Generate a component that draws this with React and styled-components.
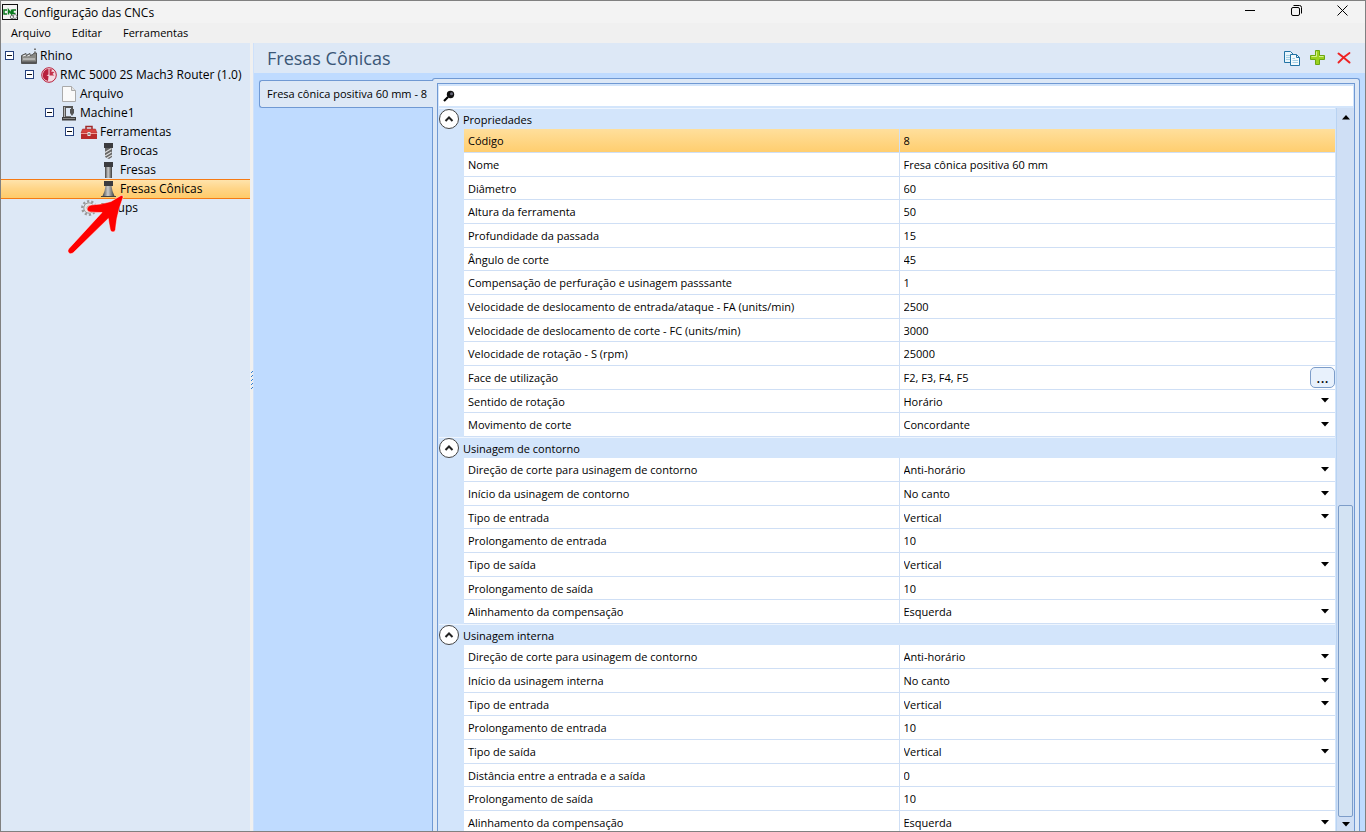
import React, { useState } from "react";
import styled, { createGlobalStyle, css } from "styled-components";

const GlobalStyle = createGlobalStyle`
  * { box-sizing: border-box; }
  html, body { margin: 0; height: 100%; }
  body, button, input, select {
    font-family: "Open Sans", "Noto Sans", sans-serif;
    font-size: 11px;
    color: #000;
  }
  button, input, select { margin: 0; padding: 0; border: 0; background: none; }
`;

const Window = styled.div`
  display: flex;
  flex-direction: column;
  height: 100vh;
  border: 1px solid #808080;
  background: #f0f0f0;
  overflow: hidden;
`;

const TitleBar = styled.header`
  display: flex;
  align-items: center;
  flex: none;
  height: 22px;
  padding-left: 1px;
  background: #f3f3f3;
`;

const WindowTitle = styled.h1`
  flex: 1;
  margin: 0;
  padding-left: 6px;
  font-size: 12px;
  font-weight: 400;
`;

const WindowButton = styled.button`
  display: grid;
  place-items: center;
  align-self: flex-start;
  width: 46px;
  height: 18px;
`;

const MenuBar = styled.nav`
  display: flex;
  align-items: center;
  flex: none;
  height: 20px;
  padding-left: 10px;
  gap: 21px;
`;

const MenuItem = styled.button`
  height: 20px;
  line-height: 20px;
`;

const Workspace = styled.div`
  display: grid;
  grid-template-columns: 249px 3px minmax(0, 1fr);
  flex: 1;
  min-height: 0;
`;

const Tree = styled.ul`
  position: relative;
  margin: 0;
  padding: 3px 0 0;
  list-style: none;
  background: #dde8f6;
`;

const TreeRow = styled.li`
  display: flex;
  align-items: center;
  height: 19px;
  padding-left: ${(p) => 4 + p.$depth * 20}px;
  font-size: 12px;
  white-space: nowrap;
  ${(p) =>
    p.$selected &&
    css`
      background: linear-gradient(#ffe5b0, #ffd588 50%, #ffcb69);
      box-shadow: inset 0 1px #f57a14, 0 1px #f57a14;
    `}
`;

const Expander = styled.button`
  display: grid;
  place-items: center;
  width: 9px;
  height: 9px;
  margin-right: 6px;
  border: 1px solid ${(p) => (p.$hidden ? "transparent" : "#24407c")};
  background: ${(p) => (p.$hidden ? "transparent" : "#fff")};
  visibility: ${(p) => (p.$hidden ? "hidden" : "visible")};
  &::after {
    content: "";
    width: 5px;
    height: 1px;
    background: #111;
  }
`;

const TreeIcon = styled.svg`
  flex: none;
  width: 18px;
  height: 18px;
  margin-right: 2px;
`;

const Pointer = styled.svg`
  position: absolute;
  left: 65px;
  top: 150px;
  width: 60px;
  height: 64px;
  pointer-events: none;
`;

const Splitter = styled.div`
  display: grid;
  grid-template-rows: 327fr 20px 441fr;
  background: #f0f0f0;
`;

const SplitterGrip = styled.svg`
  grid-row: 2;
`;

const Main = styled.main`
  display: flex;
  flex-direction: column;
  min-width: 0;
  min-height: 0;
  border-left: 1px solid #cfe1fa;
  background: #bfdbff;
`;

const MainHeader = styled.div`
  display: flex;
  align-items: center;
  flex: none;
  height: 30px;
  padding: 0 8px 0 13px;
  background: #dde8f6;
`;

const Heading = styled.h2`
  flex: 1;
  margin: 0;
  font-size: 18px;
  font-weight: 400;
  line-height: 30px;
  color: #3b5777;
`;

const ToolButton = styled.button`
  display: grid;
  place-items: center;
  width: 26px;
  height: 24px;
`;

const TabArea = styled.div`
  display: flex;
  flex: 1;
  min-height: 0;
  padding: 5px 5px 0;
`;

const TabList = styled.div`
  flex: none;
  width: 173px;
  padding-top: 2px;
`;

const Tab = styled.button`
  position: relative;
  z-index: 1;
  width: 174px;
  height: 28px;
  border: 1px solid #7099d3;
  border-right: 0;
  border-radius: 3px 0 0 3px;
  padding: 0 0 2px 7px;
  background: #dde8f6;
  text-align: left;
  white-space: nowrap;
`;

const TabPanel = styled.section`
  display: flex;
  flex: 1;
  min-width: 0;
  border: 1px solid #7099d3;
  border-bottom: 0;
  border-radius: 3px 3px 0 0;
  padding: 4px 4px 0;
  background: #dde8f6;
`;

const Grid = styled.div`
  display: flex;
  flex-direction: column;
  flex: 1;
  min-width: 0;
  border: 1px solid #7099d3;
  border-bottom: 0;
  padding: 2px 0 0 1px;
  background: #d3e5fb;
`;

const SearchRow = styled.label`
  display: flex;
  align-items: center;
  flex: none;
  height: 20px;
  margin: 0 1px 2px 0;
  padding-left: 4px;
  gap: 4px;
  background: #fff;
`;

const SearchInput = styled.input`
  flex: 1;
  height: 20px;
  outline: 0;
`;

const ScrollFrame = styled.div`
  display: grid;
  grid-template-columns: minmax(0, 1fr) 18px;
  flex: 1;
  min-height: 0;
`;

const Groups = styled.div`
  min-height: 0;
  padding-right: 1px;
  overflow: hidden;
  background: #d3e5fb;
`;

const GroupHead = styled.div`
  display: flex;
  align-items: center;
  height: 21px;
  border-top: 1px solid #eef5fe;
  gap: 4px;
`;

const GroupTitle = styled.h3`
  margin: 0;
  font-size: 11px;
  font-weight: 400;
`;

const Collapse = styled.button`
  position: relative;
  z-index: 1;
  display: grid;
  place-items: center;
  width: 20px;
  height: 20px;
  border: 1px solid #444;
  border-radius: 50%;
  background: #fff;
`;

const GroupBody = styled.div`
  padding-left: 25px;
`;

const PropTable = styled.table`
  width: 100%;
  border-spacing: 0;
  table-layout: fixed;
`;

const NameCell = styled.th`
  width: 50%;
  height: 24px;
  padding: 0 0 0 4px;
  border-bottom: 1px solid #cfdff5;
  border-right: 1px solid #cfdff5;
  font-weight: 400;
  text-align: left;
  white-space: nowrap;
`;

const ValueCell = styled.td`
  height: 24px;
  padding: 0 0 0 4px;
  border-bottom: 1px solid #cfdff5;
`;

const PropRow = styled.tr`
  background: #fff;
  &:nth-child(3n) > * { height: 23px; }
  ${(p) =>
    p.$selected &&
    css`
      background: linear-gradient(#ffdf9c, #ffcd6d);
    `}
`;

const ValueBox = styled.div`
  display: flex;
  align-items: center;
  position: relative;
  height: 22px;
`;

const ValueInput = styled.input`
  flex: 1;
  min-width: 0;
  height: 20px;
  outline: 0;
`;

const ValueSelect = styled.select`
  flex: 1;
  height: 20px;
  appearance: none;
  outline: 0;
`;

const SelectArrow = styled.svg`
  position: absolute;
  right: 6px;
  top: 8px;
  width: 8px;
  height: 5px;
  pointer-events: none;
`;

const MoreButton = styled.button`
  width: 25px;
  height: 21px;
  border: 1px solid #7d9dc9;
  border-radius: 5px;
  background: #e8f1fc;
  line-height: 17px;
  font-size: 16px;
`;

const ScrollBar = styled.div`
  display: grid;
  grid-template-rows: 18px 379fr 312fr 14px;
  justify-items: center;
  border-left: 1px solid #b9d3f2;
  background: #cfdff5;
`;

const ScrollButton = styled.button`
  grid-row: ${(p) => p.$row};
  display: grid;
  place-items: center;
  width: 16px;
`;

const ScrollThumb = styled.div`
  grid-row: 3;
  width: 15px;
  border: 1px solid #7d9dc9;
  border-radius: 2px;
  background: #d3e3f3;
`;

const steel = (
  <defs>
    <linearGradient id="steel" x1="0" x2="1">
      <stop offset="0" stopColor="#444" />
      <stop offset="0.45" stopColor="#ccc" />
      <stop offset="1" stopColor="#3c3c3c" />
    </linearGradient>
  </defs>
);

const treeIcons = {
  factory: (
    <>
      <path d="M1.500 16.500V8.500L6 6.500V8.500L10 6.500V8.500L13 7.500L14 6H16.500V16.500Z" fill="#8a8a86" stroke="#555" />
      <path d="M3 9L6 8M7.500 9L10 8" stroke="#eee" />
      <path d="M3 12H15" stroke="#ddd" />
      <path d="M2 15.500H16" stroke="#555" strokeWidth="2" />
      <path d="M15 6V4.500M15 3V1.500" stroke="#777" strokeWidth="2" />
    </>
  ),
  router: (
    <>
      <circle cx="9" cy="9" r="7.300" fill="#f3dbe2" stroke="#b8203c" />
      <path d="M8.500 3A6 6 0 0 0 5.500 14L8 15L8.500 10L6.500 9.500L8.500 8.500Z" fill="#b8203c" />
      <path d="M9.500 3L12.500 3.500L11 5.500L14.500 6L12.500 8L14.500 9.500L9.500 9.500Z" fill="#c4304a" />
    </>
  ),
  file: (
    <>
      <path d="M2.500 1.500H11.500L15.500 5.500V16.500H2.500Z" fill="#fafafa" stroke="#aaa" />
      <path d="M11.500 1.500V5.500H15.500" fill="#e4e4e4" stroke="#aaa" />
    </>
  ),
  machine: (
    <>
      <path d="M3 13V2H13V6H11V4H6V13Z" fill="#555" />
      <path d="M4.500 3V13" stroke="#b5b5b5" />
      <path d="M10 5H14V9L12 12L10 9Z" fill="#555" />
      <path d="M6 12.500H11" stroke="#777" />
      <path d="M2 13H16V16.500H2Z" fill="#3c3c3c" />
      <path d="M3 14.500H15" stroke="#888" />
    </>
  ),
  toolbox: (
    <>
      <path d="M6 6V3.500H12V6" fill="none" stroke="#a02a2a" strokeWidth="1.500" />
      <path d="M2.500 6H15.500L17 10H1Z" fill="#d84440" stroke="#9a2222" strokeWidth="0.500" />
      <path d="M1 10H17V16H1Z" fill="#b92b2b" />
      <path d="M1 10.500H17" stroke="#ef9b96" />
      <path d="M7.500 9H10.500V13H7.500Z" fill="#e8e8e8" />
      <path d="M9 10V12" stroke="#444" />
    </>
  ),
  drill: (
    <>
      <path d="M4 1H13V6H4Z" fill="#3b3b3f" />
      <path d="M5 6H12V15L9 17L5 15Z" fill="#666" />
      <path d="M5 10.500L11.500 6.500M5 14L11.500 10M7 16L12 13" stroke="#ddd" strokeWidth="1.200" />
    </>
  ),
  mill: (
    <>
      {steel}
      <path d="M4 1H13V6H4Z" fill="#3b3b3f" />
      <path d="M5 6H12V17H5Z" fill="url(#steel)" />
    </>
  ),
  cone: (
    <>
      {steel}
      <path d="M4 1H13V6H4Z" fill="#3b3b3f" />
      <path d="M5.500 6H11.500L12.500 11L14.500 16H2.500L4.500 11Z" fill="url(#steel)" />
      <path d="M1 16.500H16" stroke="#444" />
    </>
  ),
  gear: (
    <>
      <circle cx="9" cy="9" r="6.700" fill="none" stroke="#9a9a9a" strokeWidth="2.400" strokeDasharray="2.200 2" />
      <circle cx="9" cy="9" r="5.200" fill="#e4e4e4" stroke="#999" />
      <circle cx="9" cy="9" r="2" fill="#fff" stroke="#999" />
    </>
  ),
};

const treeItems = [
  { label: "Rhino", icon: "factory", depth: 0, open: true },
  { label: "RMC 5000 2S Mach3 Router (1.0)", icon: "router", depth: 1, open: true },
  { label: "Arquivo", icon: "file", depth: 2 },
  { label: "Machine1", icon: "machine", depth: 2, open: true },
  { label: "Ferramentas", icon: "toolbox", depth: 3, open: true },
  { label: "Brocas", icon: "drill", depth: 4 },
  { label: "Fresas", icon: "mill", depth: 4 },
  { label: "Fresas Cônicas", icon: "cone", depth: 4, selected: true },
  { label: "Setups", icon: "gear", depth: 3 },
];

const groups = [
  {
    title: "Propriedades",
    rows: [
      ["Código", "8"],
      ["Nome", "Fresa cônica positiva 60 mm"],
      ["Diâmetro", "60"],
      ["Altura da ferramenta", "50"],
      ["Profundidade da passada", "15"],
      ["Ângulo de corte", "45"],
      ["Compensação de perfuração e usinagem passsante", "1"],
      ["Velocidade de deslocamento de entrada/ataque - FA (units/min)", "2500"],
      ["Velocidade de deslocamento de corte - FC (units/min)", "3000"],
      ["Velocidade de rotação - S (rpm)", "25000"],
      ["Face de utilização", "F2, F3, F4, F5", "more"],
      ["Sentido de rotação", "Horário", "select"],
      ["Movimento de corte", "Concordante", "select"],
    ],
  },
  {
    title: "Usinagem de contorno",
    rows: [
      ["Direção de corte para usinagem de contorno", "Anti-horário", "select"],
      ["Início da usinagem de contorno", "No canto", "select"],
      ["Tipo de entrada", "Vertical", "select"],
      ["Prolongamento de entrada", "10"],
      ["Tipo de saída", "Vertical", "select"],
      ["Prolongamento de saída", "10"],
      ["Alinhamento da compensação", "Esquerda", "select"],
    ],
  },
  {
    title: "Usinagem interna",
    rows: [
      ["Direção de corte para usinagem de contorno", "Anti-horário", "select"],
      ["Início da usinagem interna", "No canto", "select"],
      ["Tipo de entrada", "Vertical", "select"],
      ["Prolongamento de entrada", "10"],
      ["Tipo de saída", "Vertical", "select"],
      ["Distância entre a entrada e a saída", "0"],
      ["Prolongamento de saída", "10"],
      ["Alinhamento da compensação", "Esquerda", "select"],
    ],
  },
];

function Property({ id, name, value, kind, selected }) {
  return (
    <PropRow $selected={selected}>
      <NameCell scope="row">
        <label htmlFor={id}>{name}</label>
      </NameCell>
      <ValueCell>
        <ValueBox>
          {kind === "select" ? (
            <>
              <ValueSelect id={id} defaultValue={value}>
                <option>{value}</option>
              </ValueSelect>
              <SelectArrow viewBox="0 0 8 5" aria-hidden="true">
                <path d="M0 0H8L4 4.500Z" />
              </SelectArrow>
            </>
          ) : (
            <ValueInput id={id} type="text" defaultValue={value} />
          )}
          {kind === "more" && <MoreButton type="button">...</MoreButton>}
        </ValueBox>
      </ValueCell>
    </PropRow>
  );
}

function Group({ index, title, rows }) {
  const [open, setOpen] = useState(true);
  return (
    <section>
      <GroupHead>
        <Collapse type="button" aria-label={title} aria-expanded={open} onClick={() => setOpen(!open)}>
          <svg width="10" height="8" viewBox="0 0 10 8">
            <path d="M1.500 6L5 2.500L8.500 6" fill="none" stroke="#222" strokeWidth="2" />
          </svg>
        </Collapse>
        <GroupTitle>{title}</GroupTitle>
      </GroupHead>
      {open && (
        <GroupBody>
          <PropTable>
            <tbody>
              {rows.map(([name, value, kind], i) => (
                <Property
                  key={i}
                  id={`prop-${index}-${i}`}
                  name={name}
                  value={value}
                  kind={kind}
                  selected={index === 0 && i === 0}
                />
              ))}
            </tbody>
          </PropTable>
        </GroupBody>
      )}
    </section>
  );
}

export default function App() {
  return (
    <Window>
      <GlobalStyle />
      <TitleBar>
        <svg width="16" height="17" viewBox="0 0 16 17" aria-hidden="true">
          <rect x="0.500" y="0.500" width="15" height="15" fill="#f4f4f4" stroke="#111" />
          <path d="M5 6H2V10H5M6.500 10.500V6L9.500 10V5.500M14 6H11V9.500H13.500" fill="none" stroke="#0b7a1e" strokeWidth="1.500" />
          <circle cx="10" cy="13" r="1.700" fill="none" stroke="#777" />
          <circle cx="13" cy="12.500" r="2" fill="none" stroke="#888" />
        </svg>
        <WindowTitle>Configuração das CNCs</WindowTitle>
        <WindowButton type="button" aria-label="Minimizar">
          <svg width="10" height="10"><path d="M0 5.500H10" stroke="#000" /></svg>
        </WindowButton>
        <WindowButton type="button" aria-label="Restaurar">
          <svg width="11" height="11" fill="none" stroke="#000">
            <rect x="0.500" y="2.500" width="8" height="8" rx="1.500" />
            <path d="M2.500 0.500H8.500Q10.500 0.500 10.500 2.500V8.500" />
          </svg>
        </WindowButton>
        <WindowButton type="button" aria-label="Fechar">
          <svg width="11" height="11"><path d="M0.500 0.500L10.500 10.500M10.500 0.500L0.500 10.500" stroke="#000" /></svg>
        </WindowButton>
      </TitleBar>
      <MenuBar>
        <MenuItem type="button">Arquivo</MenuItem>
        <MenuItem type="button">Editar</MenuItem>
        <MenuItem type="button">Ferramentas</MenuItem>
      </MenuBar>
      <Workspace>
        <Tree>
          {treeItems.map((item) => (
            <TreeRow key={item.label} $depth={item.depth} $selected={item.selected}>
              <Expander type="button" aria-label={item.label} $hidden={!item.open} />
              <TreeIcon viewBox="0 0 18 18" aria-hidden="true">{treeIcons[item.icon]}</TreeIcon>
              {item.label}
            </TreeRow>
          ))}
          <Pointer viewBox="0 0 60 64" aria-hidden="true">
            <path
              d="M55 2.500Q57.500 1.500 57 4.500Q53 15 51 25Q50 31 49.500 36.500Q49 39 47 39Q45 39 44.300 37Q43 31 42.300 25.500L7 60Q4.500 61.500 2.700 60Q1 58 2.500 56L36 19.500Q30 19.500 24 19Q21 18.500 21 16Q21.500 12.500 25 12Q36 11.500 45 8.500Z"
              fill="#fe0000"
              stroke="#fff"
              strokeWidth="0.500"
            />
          </Pointer>
        </Tree>
        <Splitter>
          <SplitterGrip width="3" height="20" aria-hidden="true">
            <path d="M2 1.500h1M1 2.500h1M2 5.500h1M1 6.500h1M2 9.500h1M1 10.500h1M2 13.500h1M1 14.500h1M2 17.500h1M1 18.500h1" stroke="#2f7fd6" />
          </SplitterGrip>
        </Splitter>
        <Main>
          <MainHeader>
            <Heading>Fresas Cônicas</Heading>
            <ToolButton type="button" aria-label="Copiar">
              <svg width="17" height="17" viewBox="0 0 17 17" stroke="#2273a5">
                <path d="M0.500 1.500H6.500L9.500 4.500V12.500H0.500Z" fill="#e9f5fb" />
                <path d="M2 5.500H6M2 7.500H6M2 9.500H6" stroke="#a4cfe5" />
                <path d="M6.500 4.500H12.500L15.500 7.500V15.500H6.500Z" fill="#f3fafd" />
                <path d="M12.500 4.500V7.500H15.500" fill="none" />
                <path d="M8.500 8.500H11M8.500 10.500H14M8.500 12.500H14" stroke="#a4cfe5" />
              </svg>
            </ToolButton>
            <ToolButton type="button" aria-label="Adicionar">
              <svg width="16" height="16" viewBox="0 0 16 16">
                <path d="M5.500 0.500H9.500V5.500H14.500V9.500H9.500V14.500H5.500V9.500H0.500V5.500H5.500Z" fill="#9ad11f" stroke="#6ba612" />
                <path d="M6.500 1.500V6.500H1.500M9 6.500H13.500" fill="none" stroke="#d6f08f" />
              </svg>
            </ToolButton>
            <ToolButton type="button" aria-label="Excluir">
              <svg width="14" height="12" viewBox="0 0 14 12" fill="none" stroke="#ee2222" strokeLinecap="round">
                <path d="M1.500 1.500L6 5L12.500 10.500" strokeWidth="2" />
                <path d="M12.500 1L6.500 5.500L1.500 10.500" strokeWidth="1.800" />
              </svg>
            </ToolButton>
          </MainHeader>
          <TabArea>
            <TabList role="tablist">
              <Tab type="button" role="tab" aria-selected="true">Fresa cônica positiva 60 mm - 8</Tab>
            </TabList>
            <TabPanel role="tabpanel">
              <Grid>
                <SearchRow>
                  <svg width="12" height="12" viewBox="0 0 12 12" aria-hidden="true">
                    <path d="M1 11L5 7" stroke="#000" strokeWidth="2.200" />
                    <circle cx="7.500" cy="4.500" r="3.700" fill="#111" />
                    <circle cx="8.500" cy="3.800" r="1.500" fill="#667" />
                  </svg>
                  <SearchInput type="text" aria-label="Pesquisar" />
                </SearchRow>
                <ScrollFrame>
                  <Groups>
                    {groups.map((g, i) => (
                      <Group key={g.title} index={i} title={g.title} rows={g.rows} />
                    ))}
                  </Groups>
                  <ScrollBar>
                    <ScrollButton type="button" $row={1} aria-label="Rolar para cima">
                      <svg width="8" height="5"><path d="M0 4.500H8L4 0Z" /></svg>
                    </ScrollButton>
                    <ScrollThumb />
                    <ScrollButton type="button" $row={4} aria-label="Rolar para baixo">
                      <svg width="8" height="5"><path d="M0 0H8L4 4.500Z" /></svg>
                    </ScrollButton>
                  </ScrollBar>
                </ScrollFrame>
              </Grid>
            </TabPanel>
          </TabArea>
        </Main>
      </Workspace>
    </Window>
  );
}
